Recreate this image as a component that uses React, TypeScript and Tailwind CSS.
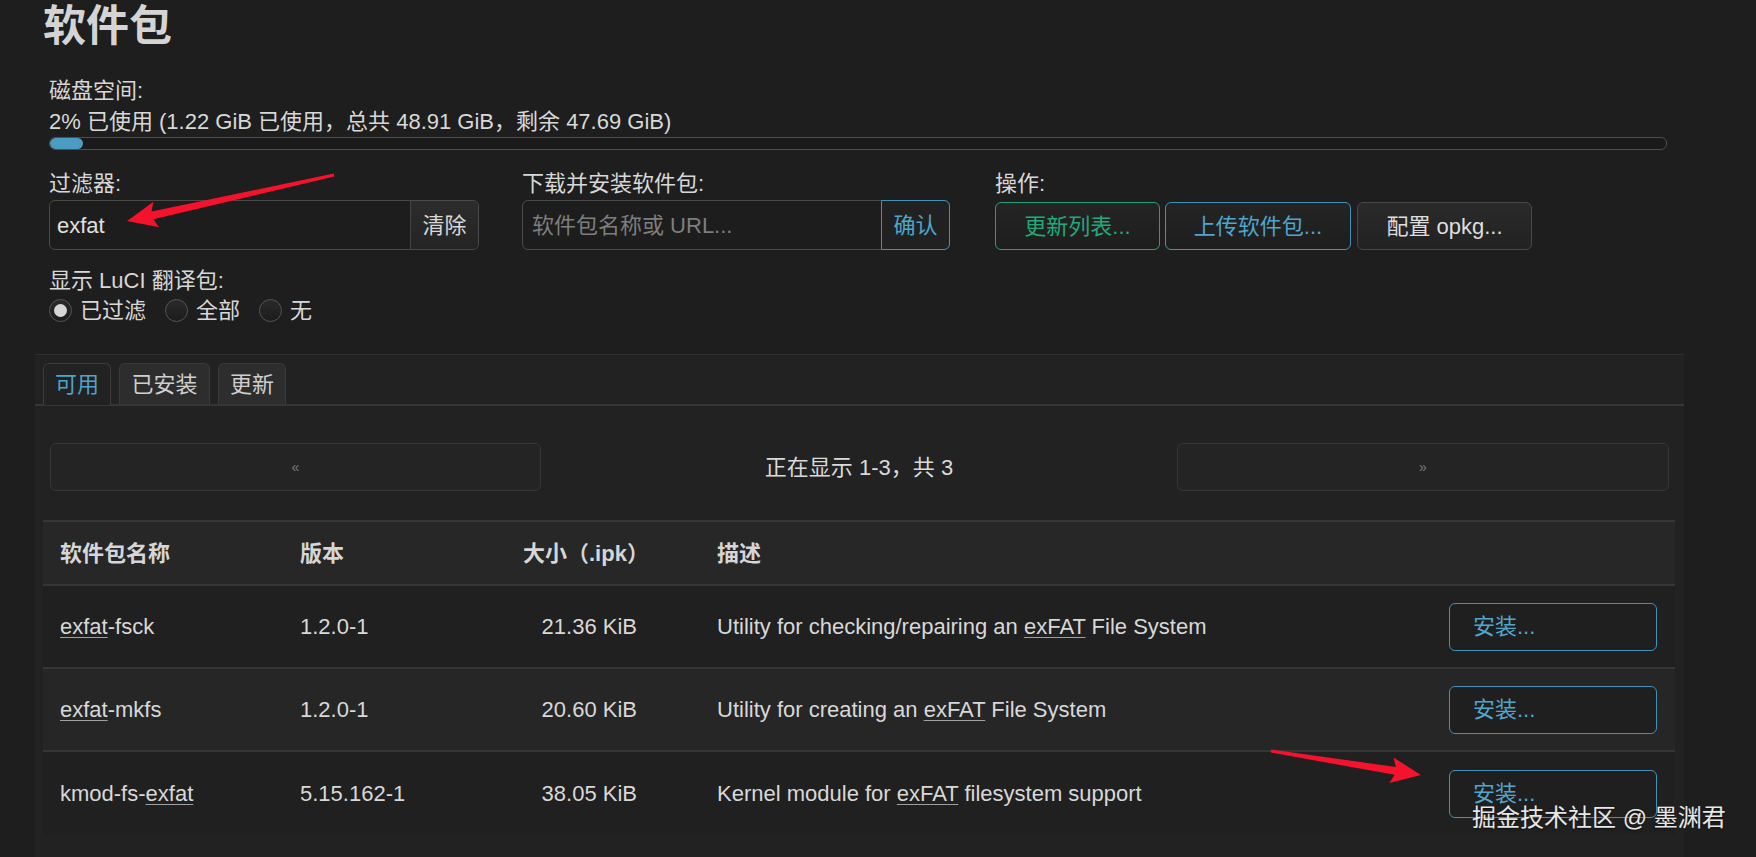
import type { ReactNode } from "react";

const u = (t: string) => (
  <span className="underline decoration-1 underline-offset-[3px] decoration-[#a0a0a0]">{t}</span>
);

const rows: { name: ReactNode; version: string; size: string; desc: ReactNode }[] = [
  {
    name: <>{u("exfat")}-fsck</>,
    version: "1.2.0-1",
    size: "21.36 KiB",
    desc: <>Utility for checking/repairing an {u("exFAT")} File System</>,
  },
  {
    name: <>{u("exfat")}-mkfs</>,
    version: "1.2.0-1",
    size: "20.60 KiB",
    desc: <>Utility for creating an {u("exFAT")} File System</>,
  },
  {
    name: <>kmod-fs-{u("exfat")}</>,
    version: "5.15.162-1",
    size: "38.05 KiB",
    desc: <>Kernel module for {u("exFAT")} filesystem support</>,
  },
];

function Radio({ checked, label }: { checked?: boolean; label: string }) {
  return (
    <label className="flex items-center">
      <span className="grid h-[23px] w-[23px] place-items-center rounded-full border-[1.5px] border-[#555] bg-gradient-to-b from-[#2a2a2a] to-[#1c1c1c]">
        {checked && <span className="h-[13px] w-[13px] rounded-full bg-[#d6d6d6]" />}
      </span>
      <span className="ml-[8px]">{label}</span>
    </label>
  );
}

export default function App() {
  return (
    <div className="relative h-[857px] w-[1756px] overflow-hidden bg-[#1e1e1e] font-['Liberation_Sans','Noto_Sans_CJK_SC',sans-serif] text-[22px] text-[#d8d8d8]">
      <h1 className="pl-[43px] text-[43px] font-bold leading-[52px] text-[#d4d4d4]">软件包</h1>

      <div className="pl-[49px]">
        <div className="mt-[24px] leading-[30px]">磁盘空间:</div>
        <div className="leading-[31px]">2% 已使用 (1.22 GiB 已使用，总共 48.91 GiB，剩余 47.69 GiB)</div>
        <div className="h-[13px] w-[1618px] overflow-hidden rounded-[6px] border border-[#4e4e4e] bg-[#1a1a1a]">
          <div className="h-full w-[33px] rounded-[6px] bg-[#4b9cc2]" />
        </div>

        <div className="mt-[19px] flex">
          <div className="w-[430px]">
            <div className="leading-[30px]">过滤器:</div>
            <div className="mt-[1px] flex h-[50px] rounded-[6px] border border-[#4a4a4a] bg-[#1d1d1d]">
              <div className="flex flex-1 items-center pl-[7px] text-[#e0e0e0]">exfat</div>
              <div className="grid w-[68px] place-items-center rounded-r-[6px] border-l border-[#444] bg-gradient-to-b from-[#2c2c2c] to-[#242424]">
                清除
              </div>
            </div>
          </div>

          <div className="ml-[43px] w-[428px]">
            <div className="leading-[30px]">下载并安装软件包:</div>
            <div className="mt-[1px] flex h-[50px] rounded-[6px] border border-[#4a4a4a] bg-[#1d1d1d]">
              <div className="flex flex-1 items-center pl-[9px] text-[#7e7e7e]">软件包名称或 URL...</div>
              <div className="-my-px -mr-px grid w-[69px] place-items-center rounded-r-[6px] border border-[#3f92b8] bg-[#212121] text-[#4fa5cc]">
                确认
              </div>
            </div>
          </div>

          <div className="ml-[45px]">
            <div className="leading-[30px]">操作:</div>
            <div className="mt-[3px] flex gap-[5px]">
              <button className="h-[48px] w-[165px] rounded-[6px] border-[1.5px] border-[#20a276] bg-gradient-to-b from-[#242424] to-[#1e1e1e] text-[#23a879]">
                更新列表...
              </button>
              <button className="h-[48px] w-[186px] rounded-[6px] border-[1.5px] border-[#3f92b8] bg-gradient-to-b from-[#242424] to-[#1e1e1e] text-[#4fa5cc]">
                上传软件包...
              </button>
              <button className="ml-px h-[48px] w-[175px] rounded-[6px] border-[1.5px] border-[#484848] bg-gradient-to-b from-[#2a2a2a] to-[#222] text-[#dedede]">
                配置 opkg...
              </button>
            </div>
          </div>
        </div>

        <div className="mt-[16px] leading-[30px]">显示 LuCI 翻译包:</div>
        <div className="flex h-[28px] items-center">
          <Radio checked label="已过滤" />
          <div className="ml-[19px]">
            <Radio label="全部" />
          </div>
          <div className="ml-[19px]">
            <Radio label="无" />
          </div>
        </div>
      </div>

      <div className="ml-[35px] mt-[30px] h-[600px] w-[1649px] border-t border-[#2e2e2e] bg-[#222222] pt-[8px]">
        <div className="flex gap-[8px] border-b-2 border-[#363636] pl-[8px]">
          <div className="-mb-[2px] grid h-[42px] w-[68px] place-items-center rounded-t-[6px] border border-b-0 border-[#3c3c3c] bg-[#222222] text-[#4ea3c9]">
            可用
          </div>
          <div className="grid h-[41px] w-[91px] place-items-center rounded-t-[6px] border border-b-0 border-[#3a3a3a] bg-[#2d2d2d] text-[#cfcfcf]">
            已安装
          </div>
          <div className="grid h-[41px] w-[68px] place-items-center rounded-t-[6px] border border-b-0 border-[#3a3a3a] bg-[#2d2d2d] text-[#cfcfcf]">
            更新
          </div>
        </div>

        <div className="mx-[15px] mt-[37px] flex h-[48px] items-center">
          <div className="grid h-full w-[491px] place-items-center rounded-[6px] border border-[#363636] bg-[#242424] text-[14px] text-[#7a7a7a]">
            «
          </div>
          <div className="flex-1 text-center text-[#dadada]">正在显示 1-3，共 3</div>
          <div className="grid h-full w-[492px] place-items-center rounded-[6px] border border-[#363636] bg-[#242424] text-[14px] text-[#7a7a7a]">
            »
          </div>
        </div>

        <div className="ml-[8px] mt-[29px] w-[1632px]">
          <div className="grid h-[66px] grid-cols-[240px_223px_194px_732px_243px] items-center border-y-2 border-[#363636] bg-[#272727] font-bold text-[#d6d6d6]">
            <div className="pl-[17px]">软件包名称</div>
            <div className="pl-[17px]">版本</div>
            <div className="pl-[17px]">大小（.ipk）</div>
            <div className="pl-[17px]">描述</div>
            <div />
          </div>
          {rows.map((r, i) => (
            <div
              key={i}
              className={`grid h-[83px] grid-cols-[240px_223px_194px_732px_243px] items-center ${
                i < rows.length - 1 ? "border-b-2 border-[#363636]" : ""
              } ${i === 1 ? "bg-[#262626]" : "bg-[#202020]"}`}
            >
              <div className="pl-[17px]">{r.name}</div>
              <div className="pl-[17px]">{r.version}</div>
              <div className="pr-[63px] text-right">{r.size}</div>
              <div className="pl-[17px]">{r.desc}</div>
              <div className="pl-[17px]">
                <button className="h-[48px] w-[208px] rounded-[6px] border-[1.5px] border-[#3f92b8] bg-[#1f1f1f] pl-[23px] text-left text-[#52a6cc]">
                  安装...
                </button>
              </div>
            </div>
          ))}
        </div>
      </div>

      <svg className="pointer-events-none absolute left-0 top-0" width="1756" height="857" viewBox="0 0 1756 857">
        <polygon
          points="127,221 153.5,201.8 151.5,211.5 333.8,173.5 334.3,176.5 153.3,219.3 159.1,227.2"
          fill="#f4122c"
        />
        <polygon
          points="1421,775 1393.5,757.5 1395.9,767 1271.2,749.6 1270.8,752.6 1394.7,774.8 1389.3,783.1"
          fill="#f4122c"
        />
      </svg>

      <div className="pointer-events-none absolute left-[1472px] top-[803px] text-[24px] leading-[30px] text-white/90 [text-shadow:0_1px_2px_rgba(0,0,0,0.6)]">
        掘金技术社区 @ 墨渊君
      </div>
    </div>
  );
}
